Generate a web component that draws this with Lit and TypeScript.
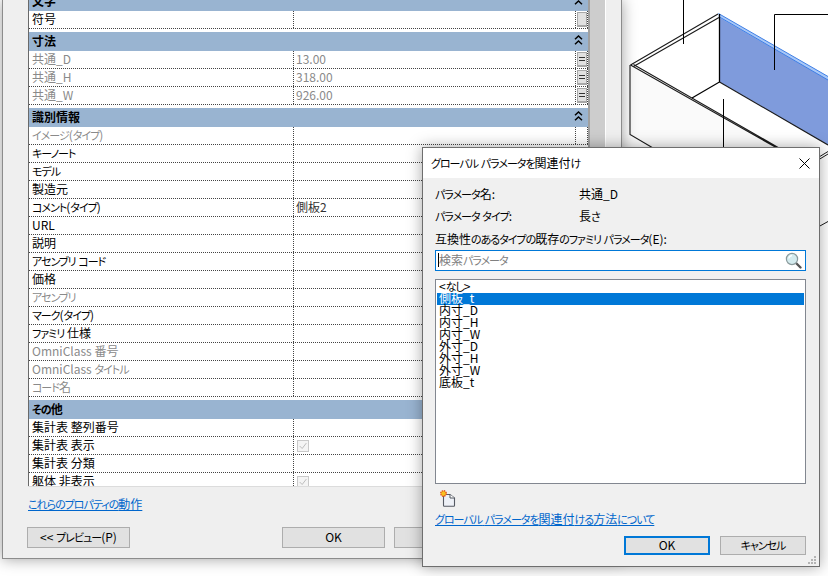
import { LitElement, html, css, svg, nothing } from "lit";
import { customElement } from "lit/decorators.js";

type Row = { name: string; value?: string; dim?: boolean; btn?: boolean; check?: boolean };
type Group = { title: string; rows: Row[] };

const groups: Group[] = [
  { title: "文字", rows: [{ name: "符号", btn: true }] },
  {
    title: "寸法",
    rows: [
      { name: "共通_D", value: "13.00", dim: true, btn: true },
      { name: "共通_H", value: "318.00", dim: true, btn: true },
      { name: "共通_W", value: "926.00", dim: true, btn: true },
    ],
  },
  {
    title: "識別情報",
    rows: [
      { name: "イメージ(タイプ)", dim: true },
      { name: "キーノート" },
      { name: "モデル" },
      { name: "製造元" },
      { name: "コメント(タイプ)", value: "側板2" },
      { name: "URL" },
      { name: "説明" },
      { name: "アセンブリ コード" },
      { name: "価格" },
      { name: "アセンブリ", dim: true },
      { name: "マーク(タイプ)" },
      { name: "ファミリ 仕様" },
      { name: "OmniClass 番号", dim: true },
      { name: "OmniClass タイトル", dim: true },
      { name: "コード名", dim: true },
    ],
  },
  {
    title: "その他",
    rows: [
      { name: "集計表 整列番号" },
      { name: "集計表 表示", check: true },
      { name: "集計表 分類" },
      { name: "躯体 非表示", check: true },
    ],
  },
];

const listItems = ["<なし>", "側板_t", "内寸_D", "内寸_H", "内寸_W", "外寸_D", "外寸_H", "外寸_W", "底板_t"];

const chevron = html`<svg class="chev" width="9" height="10" viewBox="0 0 9 10" fill="none" stroke="#000" stroke-width="1.5">
  <path d="M1 4.2 L4.5 1 L8 4.2" /><path d="M1 9.2 L4.5 6 L8 9.2" />
</svg>`;

/* Kana in the reference's UI font are much narrower than in Noto: wrap them. */
function jp(text: string) {
  return text
    .split(/([\u3040-\u30ff]+)/)
    .map((part, i) => (i % 2 ? html`<span class="kana">${part}</span>` : part));
}

@customElement("app-root")
export class AppRoot extends LitElement {
  static styles = css`
    :host {
      display: block;
      position: relative;
      width: 828px;
      height: 576px;
      overflow: hidden;
      background: #fff;
      font-family: "Noto Sans CJK JP", "Noto Sans", sans-serif;
      font-size: 12px;
      font-feature-settings: "palt";
      color: #000;
    }
    .kana {
      font-size: 11px;
      letter-spacing: -1px;
    }
    .view {
      position: absolute;
      left: 622px;
      top: 0;
      width: 206px;
      height: 240px;
    }
    .props {
      position: absolute;
      left: 2px;
      top: 0;
      width: 620px;
      height: 559px;
      box-sizing: border-box;
      background: #efefef;
      border-left: 1px solid #8c8c8c;
      border-right: 1px solid #8c8c8c;
      border-bottom: 1px solid #8c8c8c;
      box-shadow: 0 0 14px rgba(0, 0, 0, 0.38);
      padding: 0 15px 0 25px;
      display: flex;
      flex-direction: column;
    }
    .table-wrap {
      height: 486px;
      flex: none;
      display: flex;
      overflow: hidden;
      border-left: 1px solid #696969;
      border-right: 1px solid #fff;
      background: #fff;
      box-sizing: content-box;
    }
    .table {
      flex: 1;
      margin-top: -8px;
      min-width: 0;
      border-right: 2px solid #a0a0a0;
    }
    .scroll {
      width: 15px;
      flex: none;
      background: #cdcdcd;
    }
    .gheader {
      height: 19px;
      background: #99b4d1;
      font-weight: 700;
      line-height: 17px;
      padding-left: 3px;
      position: relative;
    }
    .gheader .chev {
      position: absolute;
      left: 545px;
      top: 3px;
    }
    .group {
      margin-bottom: 3px;
    }
    .row {
      display: grid;
      grid-template-columns: 264px 1fr;
      height: 18px;
      box-sizing: border-box;
      border-bottom: 1px dotted #444;
      line-height: 15px;
    }
    .name {
      padding-left: 3px;
      white-space: nowrap;
    }
    .value {
      border-left: 1px dotted #444;
      padding-left: 2px;
      color: #333;
      display: flex;
      align-items: flex-start;
      justify-content: space-between;
    }
    .dim {
      color: #8a8a8a;
    }
    .btncell {
      width: 13px;
      height: 17px;
      box-sizing: border-box;
      border-left: 1px dotted #444;
      border-right: 1px dotted #444;
      padding: 1px 0 0 1px;
      flex: none;
    }
    .cellbtn {
      width: 10px;
      height: 15px;
      box-sizing: border-box;
      background: #e1e1e1;
      border: 1px solid #a8a8a8;
      border-bottom-width: 2px;
      display: flex;
      flex-direction: column;
      justify-content: center;
      gap: 2px;
      padding: 0 1px;
    }
    .cellbtn i {
      display: block;
      height: 1px;
      background: #333;
    }
    .check {
      width: 12px;
      height: 12px;
      margin-top: 3px;
      margin-left: 1px;
      box-sizing: border-box;
      border: 1px solid #c9c9c9;
      display: block;
      background: #f4f4f4;
    }
    .rule {
      height: 1px;
      flex: none;
      background: #dcdcdc;
      margin-left: 0;
      margin-right: -15px;
    }
    a {
      color: #0066cc;
      text-decoration: underline;
    }
    .behav {
      margin-top: 9px;
      height: 18px;
      line-height: 16px;
    }
    .foot {
      margin-top: 13px;
      margin-left: -1px;
      display: flex;
    }
    .btn {
      width: 103px;
      height: 21px;
      box-sizing: border-box;
      background: #e1e1e1;
      border: 1px solid #adadad;
      text-align: center;
      line-height: 17px;
      color: #000;
      flex: none;
    }
    .foot .ok {
      margin-left: 152px;
    }
    .foot .cancel {
      margin-left: 9px;
    }
    .dialog {
      position: absolute;
      left: 422px;
      top: 147px;
      width: 398px;
      height: 420px;
      box-sizing: border-box;
      background: #f0f0f0;
      border: 1px solid #6e6e6e;
      box-shadow: 0 0 14px rgba(0, 0, 0, 0.35);
      display: flex;
      flex-direction: column;
    }
    .title {
      height: 30px;
      flex: none;
      background: #fff;
      display: flex;
      align-items: center;
      justify-content: space-between;
      padding: 0 9px 0 8px;
      line-height: 28px;
    }
    .body {
      flex: 1;
      padding: 6px 13px 0 12px;
      display: flex;
      flex-direction: column;
      position: relative;
    }
    .kv {
      display: grid;
      grid-template-columns: 144px 1fr;
      height: 22px;
      line-height: 20px;
    }
    .lab {
      margin-top: 3px;
      height: 18px;
      line-height: 16px;
    }
    .search {
      height: 21px;
      margin-top: 1px;
      box-sizing: border-box;
      border: 1px solid #0078d7;
      background: #fff;
      display: flex;
      align-items: center;
      justify-content: space-between;
      padding: 0 3px 0 2px;
      color: #808080;
      flex: none;
    }
    .ph {
      border-left: 1px solid #000;
      line-height: 13px;
      height: 14px;
      margin-top: -1px;
      white-space: nowrap;
    }
    .list {
      margin-top: 8px;
      height: 205px;
      flex: none;
      box-sizing: border-box;
      border: 1px solid #828790;
      background: #fff;
      padding: 1px;
    }
    .item {
      height: 12px;
      line-height: 10px;
      padding-left: 2px;
    }
    .item.sel {
      background: #0078d7;
      color: #fff;
    }
    .newicon {
      display: block;
      margin: 6px 0 0 5px;
      flex: none;
    }
    .howto {
      margin-top: 3px;
      height: 18px;
      line-height: 18px;
      white-space: nowrap;
    }
    .dfoot {
      margin-top: 8px;
      display: flex;
      justify-content: flex-end;
      gap: 10px;
    }
    .dbtn {
      width: 86px;
      height: 19px;
      box-sizing: border-box;
      background: #e1e1e1;
      border: 1px solid #adadad;
      text-align: center;
      line-height: 15px;
    }
    .dbtn.def {
      border: 2px solid #0078d7;
      line-height: 13px;
    }
    .grip {
      position: absolute;
      right: 2px;
      bottom: 1px;
    }
  `;

  private renderRow(r: Row) {
    return html`<div class="row">
      <div class="name ${r.dim ? "dim" : ""}">${jp(r.name)}</div>
      <div class="value ${r.dim ? "dim" : ""}">
        <span>${r.check
          ? html`<svg class="check" viewBox="0 0 12 12" fill="none" stroke="#bdbdbd" stroke-width="1.2"><path d="M2 6 L5 9 L10 2.5" /></svg>`
          : r.value ?? nothing}</span>
        ${r.btn
          ? html`<div class="btncell"><div class="cellbtn">${r.value ? html`<i></i><i></i>` : nothing}</div></div>`
          : r.name.startsWith("イメージ")
            ? html`<div class="btncell"></div>`
            : nothing}
      </div>
    </div>`;
  }

  private renderView() {
    const k = "#1a1a1a";
    return html`<svg class="view" width="206" height="240" viewBox="622 0 206 240" fill="none">
      ${svg`
        <polygon points="630,65 777,148 653,148 630,134.5" fill="#fafafa" />
        <polygon points="719.5,15 828,78 828,145 719.5,82" fill="#7f9bdc" />
        <polygon points="718.5,13.5 828,76.5 828,80 718.5,17" fill="#a9c8f7" />
        <path d="M718.5 13.5 L828 76.5 M719.5 17 L828 80" stroke="#3e7fe6" stroke-width="1" />
        <path d="M719.5 82 L828 145" stroke="${k}" stroke-width="1.1" />
        <path d="M718 14 L630.5 65 M719 17.5 L633.5 66.5" stroke="${k}" stroke-width="1.1" />
        <path d="M630.5 65 L777 148 M633.5 64.5 L779 148" stroke="${k}" stroke-width="1.1" />
        <path d="M630 65 L630 134.5 L653 148" stroke="${k}" stroke-width="1.1" />
        <path d="M719.5 14 L719.5 82 L692 98" stroke="#000" stroke-width="1.3" />
        <path d="M683.5 0 L683.5 44" stroke="#000" stroke-width="1" />
        <path d="M828 14.5 L774.5 14.5 L774.5 70" stroke="#000" stroke-width="1" />
        <path d="M723.5 99 L723.5 148" stroke="#000" stroke-width="1" />
        <path d="M819 157 L828 151.5 M819 159.5 L828 154" stroke="${k}" stroke-width="1" />
        <path d="M819 226.5 L828 221.5" stroke="${k}" stroke-width="1" />
      `}
    </svg>`;
  }

  render() {
    return html`
      ${this.renderView()}
      <div class="props">
        <div class="table-wrap">
          <div class="table">
            ${groups.map(
              (g) => html`<div class="group">
                <div class="gheader">${jp(g.title)}${chevron}</div>
                ${g.rows.map((r) => this.renderRow(r))}
              </div>`
            )}
          </div>
          <div class="scroll"></div>
        </div>
        <div class="rule"></div>
        <div class="behav"><a>${jp("これらのプロパティの動作")}</a></div>
        <div class="foot">
          <div class="btn">${jp("<< プレビュー(P)")}</div>
          <div class="btn ok">OK</div>
          <div class="btn cancel">${jp("キャンセル")}</div>
        </div>
      </div>
      <div class="dialog">
        <div class="title">
          <span>${jp("グローバル パラメータを関連付け")}</span>
          <svg width="11" height="11" viewBox="0 0 11 11" fill="none" stroke="#000" stroke-width="1">
            <path d="M0.5 0.5 L10.5 10.5 M10.5 0.5 L0.5 10.5" />
          </svg>
        </div>
        <div class="body">
          <div class="kv"><span>${jp("パラメータ名:")}</span><span>共通_D</span></div>
          <div class="kv"><span>${jp("パラメータ タイプ:")}</span><span>${jp("長さ")}</span></div>
          <div class="lab">${jp("互換性のあるタイプの既存のファミリ パラメータ(E):")}</div>
          <div class="search">
            <span class="ph">${jp("検索パラメータ")}</span>
            <svg width="17" height="17" viewBox="0 0 17 17">
              <path d="M10.5 10.5 L15.5 15.5" stroke="#555" stroke-width="2.4" stroke-linecap="round" />
              <circle cx="7" cy="7" r="5.6" fill="#d4ebee" stroke="#8a9a9c" stroke-width="1.2" />
              <path d="M3.8 6.5 A3.4 3.4 0 0 1 7 3.6" stroke="#fff" stroke-width="1.2" fill="none" />
            </svg>
          </div>
          <div class="list">
            ${listItems.map((t, i) => html`<div class="item ${i === 1 ? "sel" : ""}">${jp(t)}</div>`)}
          </div>
          <svg class="newicon" width="16" height="17" viewBox="0 0 16 17">
            <path d="M3.5 4.5 H10 L14.5 8 V15.5 Q14.5 16.2 13.8 16.2 H4.2 Q3.5 16.2 3.5 15.5 Z" fill="#eef1f7" stroke="#555a63" stroke-width="1.1" />
            <path d="M10 4.5 V8 H14.5" fill="#fff" stroke="#555a63" stroke-width="1" />
            <circle cx="3.5" cy="3.5" r="2.8" fill="#f7c020" stroke="#e2401c" stroke-width="1.2" stroke-dasharray="1.4 0.8" />
          </svg>
          <div class="howto"><a>${jp("グローバル パラメータを関連付ける方法について")}</a></div>
          <div class="dfoot">
            <div class="dbtn def">OK</div>
            <div class="dbtn">${jp("キャンセル")}</div>
          </div>
          <svg class="grip" width="9" height="9" viewBox="0 0 9 9" fill="#b4b4b4">
            <rect x="6" y="0" width="2" height="2" />
            <rect x="3" y="3" width="2" height="2" /><rect x="6" y="3" width="2" height="2" />
            <rect x="0" y="6" width="2" height="2" /><rect x="3" y="6" width="2" height="2" /><rect x="6" y="6" width="2" height="2" />
          </svg>
        </div>
      </div>
    `;
  }
}
